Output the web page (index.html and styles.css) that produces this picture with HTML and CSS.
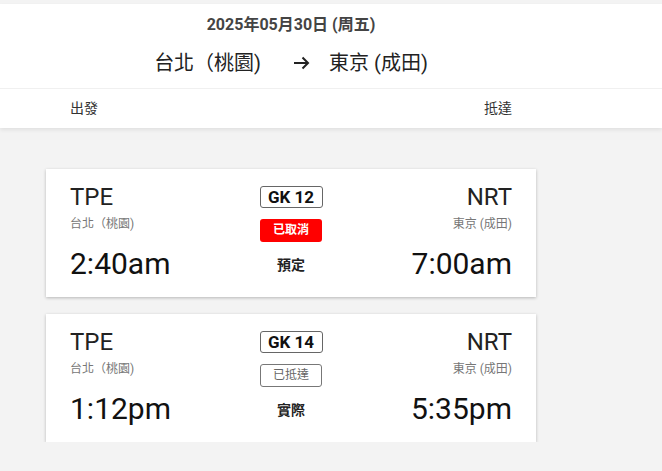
FILE: index.html
```html
<!DOCTYPE html>
<html lang="zh-Hant">
<head>
<meta charset="utf-8">
<title>航班</title>
<link rel="stylesheet" href="styles.css">
</head>
<body>
<header class="header">
  <div class="header-top">
    <div class="wrap">
      <div class="date">2025年05月30日 (周五)</div>
      <div class="route">
        <span class="city from">台北（桃園)</span>
        <svg class="arrow" width="17" height="14" viewBox="0 0 17 14"><path d="M1 7H15M9.5 1.5L15 7L9.5 12.5" fill="none" stroke="#222" stroke-width="2"/></svg>
        <span class="city to">東京 (成田)</span>
      </div>
    </div>
  </div>
  <div class="labels">
    <div class="wrap labels-inner">
      <span>出發</span>
      <span>抵達</span>
    </div>
  </div>
</header>
<main class="list">
  <div class="card">
    <div class="col col-left">
      <div class="code">TPE</div>
      <div class="sub">台北（桃園)</div>
      <div class="time">2:40am</div>
    </div>
    <div class="col col-mid">
      <div class="flight">GK 12</div>
      <div class="status status-cancel">已取消</div>
      <div class="kind">預定</div>
    </div>
    <div class="col col-right">
      <div class="code">NRT</div>
      <div class="sub">東京 (成田)</div>
      <div class="time">7:00am</div>
    </div>
  </div>
  <div class="card">
    <div class="col col-left">
      <div class="code">TPE</div>
      <div class="sub">台北（桃園)</div>
      <div class="time">1:12pm</div>
    </div>
    <div class="col col-mid">
      <div class="flight">GK 14</div>
      <div class="status status-arrived">已抵達</div>
      <div class="kind">實際</div>
    </div>
    <div class="col col-right">
      <div class="code">NRT</div>
      <div class="sub">東京 (成田)</div>
      <div class="time">5:35pm</div>
    </div>
  </div>
</main>
</body>
</html>
```
FILE: styles.css
```css
* { box-sizing: border-box; }
html, body { margin: 0; padding: 0; }
body {
  background: #f3f3f3;
  padding-top: 4px;
  font-family: Roboto, "Noto Sans CJK TC", sans-serif;
  color: #222;
}
.wrap {
  width: 490px;
  margin-left: 46px;
}
.header {
  background: #fff;
  box-shadow: 0 2px 4px rgba(0,0,0,0.08);
}
.header-top {
  height: 85px;
  border-bottom: 1px solid #f0f0f0;
  padding-top: 10px;
}
.date {
  text-align: center;
  font-weight: 700;
  font-size: 16px;
  line-height: 21px;
  color: #444;
}
.route {
  margin-top: 16px;
  display: flex;
  justify-content: center;
  align-items: center;
  font-size: 20px;
  line-height: 24px;
  color: #222;
}
.arrow { margin: 0 19px 0 32px; }
.labels { height: 39px; }
.labels-inner {
  display: flex;
  justify-content: space-between;
  padding: 0 24px;
  font-size: 14px;
  line-height: 39px;
  color: #333;
}
.list {
  padding-top: 41px;
  margin-left: 46px;
  width: 490px;
  display: flex;
  flex-direction: column;
  gap: 17px;
}
.card {
  background: #fff;
  box-shadow: 0 1px 3px rgba(0,0,0,0.25);
  height: 128px;
  padding: 14px 24px 0;
  display: grid;
  grid-template-columns: 1fr auto 1fr;
}
.col { display: flex; flex-direction: column; }
.col-right { align-items: flex-end; }
.col-mid { align-items: center; padding-top: 3px; }
.code { font-size: 24px; line-height: 28px; color: #222; }
.sub { font-size: 12px; line-height: 18px; margin-top: 4px; color: #777; }
.time { font-size: 30px; line-height: 36px; margin-top: 13px; color: #111; }
.flight {
  width: 63px;
  height: 22px;
  border: 1px solid #666;
  border-radius: 3px;
  font-weight: 700;
  font-size: 17px;
  line-height: 20px;
  text-align: center;
  color: #111;
}
.status {
  margin-top: 11px;
  width: 62px;
  height: 23px;
  border-radius: 3px;
  font-size: 12px;
  line-height: 21px;
  text-align: center;
}
.status-cancel {
  background: #f00;
  color: #fff;
  font-weight: 700;
  line-height: 23px;
}
.status-arrived {
  border: 1px solid #777;
  color: #666;
}
.kind {
  margin-top: 14px;
  font-size: 14px;
  line-height: 18px;
  font-weight: 700;
  color: #222;
}
```
